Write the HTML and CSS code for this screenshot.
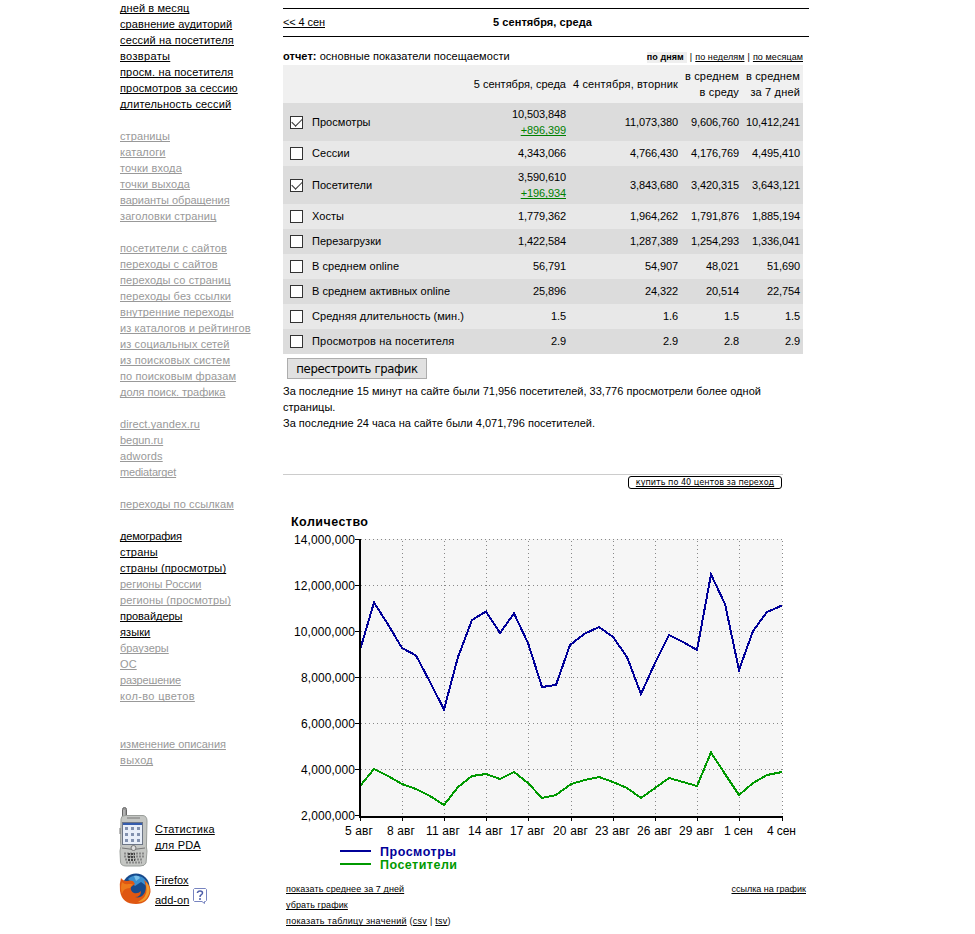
FILE: index.html
```html
<!DOCTYPE html>
<html lang="ru">
<head>
<meta charset="utf-8">
<title>Статистика</title>
<link rel="stylesheet" href="styles.css">
</head>
<body>
<div class="page">
<nav class="side">
<ul class="menu">
<li><a>дней в месяц</a></li><li><a>сравнение аудиторий</a></li><li class="loose"><a>сессий на посетителя</a></li><li class="wide"><a>возвраты</a></li><li class="loose"><a>просм. на посетителя</a></li><li class="loose"><a>просмотров за сессию</a></li><li class="loose"><a>длительность сессий</a></li>
</ul>
<ul class="menu off">
<li><a>страницы</a></li><li><a>каталоги</a></li><li class="loose"><a>точки входа</a></li><li class="loose"><a>точки выхода</a></li><li class="snug"><a>варианты обращения</a></li><li><a>заголовки страниц</a></li>
</ul>
<ul class="menu off">
<li class="loose"><a>посетители с сайтов</a></li><li><a>переходы с сайтов</a></li><li><a>переходы со страниц</a></li><li><a>переходы без ссылки</a></li><li><a>внутренние переходы</a></li><li><a>из каталогов и рейтингов</a></li><li><a>из социальных сетей</a></li><li class="loose"><a>из поисковых систем</a></li><li><a>по поисковым фразам</a></li><li class="snug"><a>доля поиск. трафика</a></li>
</ul>
<ul class="menu off">
<li><a>direct.yandex.ru</a></li><li class="snug"><a>begun.ru</a></li><li class="loose"><a>adwords</a></li><li class="tight"><a>mediatarget</a></li>
</ul>
<ul class="menu off">
<li><a>переходы по ссылкам</a></li>
</ul>
<ul class="menu">
<li class="tight"><a>демография</a></li><li class="loose"><a>страны</a></li><li class="loose"><a>страны (просмотры)</a></li><li class="off snug"><a>регионы России</a></li><li class="off"><a>регионы (просмотры)</a></li><li class="snug"><a>провайдеры</a></li><li><a>языки</a></li><li class="off snug"><a>браузеры</a></li><li class="off"><a>ОС</a></li><li class="off tight"><a>разрешение</a></li><li class="off wide"><a>кол-во цветов</a></li>
</ul>
<ul class="menu off account">
<li class="snug"><a>изменение описания</a></li><li class="wide"><a>выход</a></li>
</ul>
<div class="promo pda">
<svg width="29" height="60" viewBox="0 0 29 60">
<rect x="3.500" y=".5" width="4" height="14" rx="2" fill="#999" stroke="#666"/><path d="M5 3v10" stroke="#ccc"/>
<path d="M2 12Q2 8.500 6 8.500H24Q28 9 28 14L27.500 36Q27 40 28 44L27 56Q26 59 21 59H7Q2 59 1.500 55L1 44Q2.500 39 1.500 35Z" fill="#c4c6c3" stroke="#9a9e9a"/>
<path d="M8 11h13" stroke="#777"/><path d="M1 21v6" stroke="#777"/>
<rect x="3.500" y="15.500" width="20" height="22" fill="#e9eff9" stroke="#6d7686"/><path d="M4 17h19" stroke="#345cae" stroke-width="2"/>
<path d="M6 21.500h16M6 27.500h16M6 33.500h16" stroke="#8291ae" stroke-width="3" stroke-dasharray="3 3"/>
<path d="M3 41Q14 44 26 41" fill="none" stroke="#777"/><circle cx="14.500" cy="41" r="2.500" fill="#ddd" stroke="#777"/>
<path d="M5 46.500h20M5 49.500h20M6 52.500h18M7 55.500h16" stroke="#888" stroke-width="2" stroke-dasharray="2 1"/><path d="M9 47h7M9 50h7M9 53h7" stroke="#444" stroke-width="2" stroke-dasharray="2 1"/>
</svg>
<p><a>Статистика</a><br><a>для PDA</a></p>
</div>
<div class="promo fox">
<svg width="32" height="32" viewBox="0 0 32 32">
<circle cx="17" cy="14" r="13.500" fill="#174a8c"/><path d="M9 6Q15 0 23 4Q29 8 29 14L22 9L16 13Z" fill="#3b8fce"/><path d="M15 3q5-1 6 2l-4 3z" fill="#79bfe8"/>
<path d="M2 5Q4 8 8 8Q11 7 14 8L16 11L12 14Q11 18 15 20Q19 21 22 18Q22 24 16 24Q23 26 26 19Q28 14 25 7Q32 12 31.500 19Q29 31 17 31Q3 31 1 18Q0 11 2 5Z" fill="#df5712"/>
<path d="M27 9Q32 14 30 21Q26 30 19 29Q28 24 27.500 17Z" fill="#f29a2b"/><path d="M3 9Q6 12 9 11L14 11L11 15Q4 15 3 21Q1 15 3 9Z" fill="#ee7a1c"/>
</svg>
<p><a>Firefox</a><br><a>add-on</a></p>
<svg class="help" width="14" height="17" viewBox="0 0 14 17"><path d="M.5 1.500L1.500.5H12.500L13.500 1.500V12.500L12.500 13.500H11.500V15.500L9 13.500H1.500L.5 12.500Z" fill="#fff" stroke="#7784c0"/><path d="M4.500 5V4.500Q5 3 7 3Q9.500 3 9.500 5Q9.500 6 8 7Q7 7.500 7 9M7 10v2" fill="none" stroke="#4c5da8" stroke-width="1.500"/></svg>
</div>
</nav>
<main class="main">
<header class="datebar"><a class="prev">&lt;&lt; 4 сен</a><b>5 сентября, среда</b></header>
<div class="caption"><p class="title"><b>отчет:</b> основные показатели посещаемости</p>
<p class="period"><b>по дням</b><i>|</i><a>по неделям</a><i>|</i><a>по месяцам</a></p></div>
<table class="stats">
<colgroup><col class="c0"><col class="c1"><col class="c2"><col class="c3"><col class="c3"></colgroup>
<tr class="head"><th></th><th>5 сентября, среда</th><th class="loose">4 сентября, вторник</th><th class="loose">в среднем<br>в среду</th><th class="loose">в среднем<br>за 7 дней</th></tr>
<tr class="tall"><td><span class="box on"></span>Просмотры</td><td>10,503,848<br><a class="up">+896,399</a></td><td>11,073,380</td><td>9,606,760</td><td>10,412,241</td></tr>
<tr><td><span class="box"></span>Сессии</td><td>4,343,066</td><td>4,766,430</td><td>4,176,769</td><td>4,495,410</td></tr>
<tr class="tall"><td><span class="box on"></span>Посетители</td><td>3,590,610<br><a class="up">+196,934</a></td><td>3,843,680</td><td>3,420,315</td><td>3,643,121</td></tr>
<tr><td><span class="box"></span>Хосты</td><td>1,779,362</td><td>1,964,262</td><td>1,791,876</td><td>1,885,194</td></tr>
<tr><td><span class="box"></span>Перезагрузки</td><td>1,422,584</td><td>1,287,389</td><td>1,254,293</td><td>1,336,041</td></tr>
<tr><td><span class="box"></span>В среднем online</td><td>56,791</td><td>54,907</td><td>48,021</td><td>51,690</td></tr>
<tr><td><span class="box"></span>В среднем активных online</td><td>25,896</td><td>24,322</td><td>20,514</td><td>22,754</td></tr>
<tr><td><span class="box"></span>Средняя длительность (мин.)</td><td>1.5</td><td>1.6</td><td>1.5</td><td>1.5</td></tr>
<tr><td class="loose"><span class="box"></span>Просмотров на посетителя</td><td>2.9</td><td>2.9</td><td>2.8</td><td>2.9</td></tr>
</table>
<button class="redraw">перестроить график</button>
<p class="note">За последние 15 минут на сайте были 71,956 посетителей, 33,776 просмотрели более одной<br>страницы.<br>За последние 24 часа на сайте были 4,071,796 посетителей.</p>
<div class="ad"><a>купить по 40 центов за переход</a></div>
<svg class="chart" width="526" height="370" viewBox="283 506 526 370">
<text x="291" y="526" class="t" textLength="77">Количество</text>
<rect x="360" y="539" width="422" height="277" fill="#f6f6f6"/>
<path class="grid" d="M361 539.500H783M361 585.500H783M361 631.500H783M361 677.500H783M361 723.500H783M361 769.500H783"/>
<path class="grid" d="M402.500 541V816M444.500 541V816M486.500 541V816M528.500 541V816M571.500 541V816M613.500 541V816M655.500 541V816M697.500 541V816M739.500 541V816M782.500 541V816"/>
<path d="M355 539.500H360M355 585.500H360M355 631.500H360M355 677.500H360M355 723.500H360M355 769.500H360M355 815.500H360" stroke="#000"/>
<path d="M360.500 817V821M402.500 817V821M444.500 817V821M486.500 817V821M528.500 817V821M571.500 817V821M613.500 817V821M655.500 817V821M697.500 817V821M739.500 817V821M782.500 817V821" stroke="#000"/>
<polyline class="line views" points="360,650 374,602.500 388,624.500 402,648 416,655.500 430,682 444,709.500 458,657 472,620 486,611.500 500,633 514,613.500 528,643 542,687 556,685 570,645 585,633.500 599,627 613,637 627,657 641,694 655,663 669,635 683,642 697,650 711,574.500 725,604 739,670 753,631 767,612 782,605.500"/>
<polyline class="line visitors" points="360,786 374,769 388,776 402,784 416,789 430,796 444,805 458,787 472,776 486,774 500,779 514,772 528,783 542,798 556,795 571,784 585,780 599,777 613,782 627,788 641,798 655,788 669,778 683,782 697,786 711,752.500 725,774 739,795 753,783 767,775 782,772"/>
<path d="M360 539V817H783" fill="none" stroke="#000" stroke-width="2" shape-rendering="crispEdges"/>
<g class="lab"><text x="294" y="544" textLength="61">14,000,000</text><text x="294" y="590" textLength="61">12,000,000</text><text x="294" y="636" textLength="61">10,000,000</text><text x="301" y="682" textLength="54">8,000,000</text><text x="301" y="728" textLength="54">6,000,000</text><text x="301" y="774" textLength="54">4,000,000</text><text x="301" y="820" textLength="54">2,000,000</text></g>
<g class="lab"><text x="345" y="835" textLength="28">5 авг</text><text x="387" y="835" textLength="28">8 авг</text><text x="426" y="835" textLength="34">11 авг</text><text x="468" y="835" textLength="35">14 авг</text><text x="510" y="835" textLength="35">17 авг</text><text x="553" y="835" textLength="35">20 авг</text><text x="595" y="835" textLength="35">23 авг</text><text x="637" y="835" textLength="35">26 авг</text><text x="679" y="835" textLength="35">29 авг</text><text x="724" y="835" textLength="29">1 сен</text><text x="767" y="835" textLength="29">4 сен</text></g>
<path d="M340 851H371" stroke="#000099" stroke-width="2"/><path d="M340 864H371" stroke="#009900" stroke-width="2"/>
<text x="380" y="856" class="t" fill="#000099" textLength="76">Просмотры</text><text x="380" y="869" class="t" fill="#009900" textLength="77">Посетители</text>
</svg>
<div class="foot"><p><a class="avg">показать среднее за 7 дней</a><br><a class="hide">убрать график</a><br><span><a>показать таблицу значений</a> (<a>csv</a> | <a>tsv</a>)</span></p><p class="perma"><a>ссылка на график</a></p></div>
</main>
</div>
</body>
</html>
```
FILE: styles.css
```css
* { box-sizing: border-box; }
body { margin: 0; background: #fff; color: #000; font: 11px/16px "Liberation Sans", Arial, sans-serif; }
p, ul { margin: 0; padding: 0; }
a { text-decoration: underline; text-underline-offset: 1px; text-decoration-thickness: 1px; text-decoration-skip-ink: none; }
i { font-style: normal; }
.page { display: flex; height: 934px; overflow: hidden; }
.side { width: 163px; margin-left: 120px; flex: none; white-space: nowrap; letter-spacing: .1px; }
.menu { list-style: none; margin-bottom: 16px; }
.off { color: #999; }
.snug { letter-spacing: -.03px; }
.tight { letter-spacing: -.18px; }
.loose { letter-spacing: .16px; }
.wide { letter-spacing: .34px; }
.account { margin-top: 32px; margin-bottom: 39px; }
.promo { display: flex; margin-left: -1px; }
.promo p { flex: none; }
.pda { gap: 7px; height: 65px; letter-spacing: .2px; }
.pda p { padding-top: 14px; }
.fox { gap: 4px; padding-top: 1px; letter-spacing: 0; }
.fox p { line-height: 20px; margin-top: -3px; }
.fox .help { margin-top: 15px; }
.main { width: 526px; flex: none; }
.datebar { margin-top: 8px; height: 29px; border: solid #000; border-width: 1px 0; text-align: center; line-height: 26px; padding-right: 7px; }
.prev { float: left; letter-spacing: -.1px; }
.datebar b { margin-left: -42px; letter-spacing: .06px; }
.caption { display: flex; justify-content: space-between; width: 520px; height: 28px; padding-top: 11px; }
.title { letter-spacing: .05px; }
.period { font-size: 9px; line-height: 18px; display: flex; letter-spacing: .08px; }
.period b { background: #efefef; line-height: 11px; height: 11px; margin-top: 4px; padding-right: 3px; }
.period i { margin: 0 3px; }
.stats { border-collapse: collapse; table-layout: fixed; width: 520px; }
.c0 { width: 172px; } .c1 { width: 114px; } .c2 { width: 112px; } .c3 { width: 61px; }
.stats tr { height: 25px; background: #e8e8e8; }
.stats tr:nth-child(even) { background: #dcdcdc; }
.stats .head { height: 38px; background: #f0f0f0; }
.stats .tall { height: 38px; }
.stats th, .stats td { padding: 0 3px 1px 0; font-weight: normal; text-align: right; white-space: nowrap; }
.stats th, .stats .tall td { padding-bottom: 0; }
.stats td { letter-spacing: -.11px; }
.stats td:first-child { text-align: left; padding-left: 7px; letter-spacing: .04px; }
.stats td.loose:first-child { letter-spacing: .18px; }
.box { display: inline-block; width: 13px; height: 13px; border: 1px solid #333; background: #fff; margin-right: 9px; vertical-align: -3px; }
.on::after { content: ""; display: block; width: 9px; height: 5px; margin: 2px 0 0 1px; border: solid #333; border-width: 0 0 1.500px 1.500px; transform: translateY(-1px) rotate(-45deg); }
.up { color: #008000; }
.redraw { display: block; width: 140px; height: 21px; margin: 4px 0 4px 4px; padding: 0; border: 1px solid #adadad; background: #e1e1e1; color: #000; font: 13px/20px "DejaVu Sans Condensed", "Noto Sans", sans-serif; letter-spacing: -.35px; white-space: nowrap; }
.note { letter-spacing: .015px; }
.ad { margin-top: 43px; width: 500px; height: 32px; border-top: 1px solid #ccc; padding-top: 1px; display: flex; justify-content: flex-end; font: 9px/11px "DejaVu Sans Condensed", "DejaVu Sans", sans-serif; }
.ad a { width: 154px; height: 13px; border: 1px solid #000; border-radius: 3px; text-align: center; margin-right: 1px; white-space: nowrap; }
.chart { display: block; }
.chart text.t { font: bold 12.500px "Liberation Sans", Arial, sans-serif; }
.lab { font: 12px "Liberation Sans", Arial, sans-serif; }
.grid { stroke: #888; stroke-dasharray: 1 3; fill: none; }
.line { fill: none; stroke-width: 2; shape-rendering: crispEdges; }
.views { stroke: #000099; }
.visitors { stroke: #009900; }
.foot { display: flex; justify-content: space-between; padding: 5px 3px 0; font-size: 9px; white-space: nowrap; letter-spacing: .27px; }
.avg, .hide { letter-spacing: .1px; }
.perma { letter-spacing: 0; }
```
